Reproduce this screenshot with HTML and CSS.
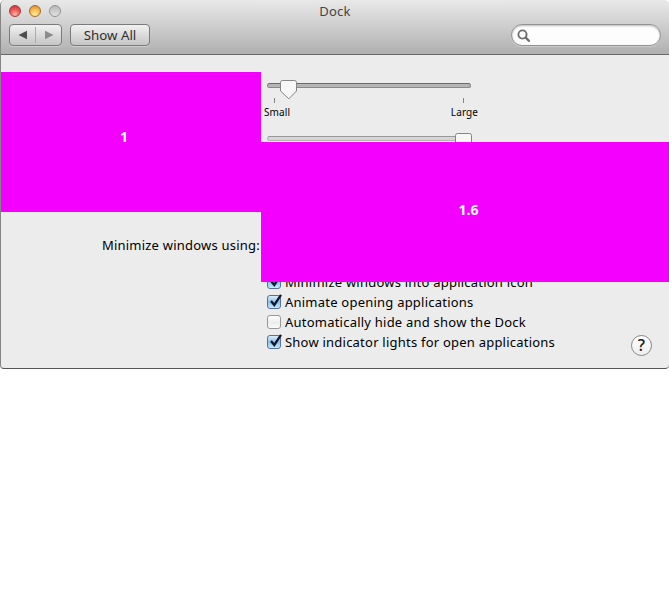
FILE: index.html
```html
<!DOCTYPE html>
<html lang="en">
<head>
<meta charset="utf-8">
<title>Dock</title>
<link rel="stylesheet" href="styles.css">
</head>
<body>
<main class="window">
  <header class="chrome">
    <div class="titlebar">
      <div class="lights"><i class="light red"></i><i class="light amber"></i><i class="light gray"></i></div>
      <h1>Dock</h1>
    </div>
    <div class="toolbar">
      <div class="nav">
        <span><svg width="10" height="10"><path d="M9 .7v8.6L.5 5z" fill="#4f4f4f"/></svg></span>
        <span><svg width="10" height="10"><path d="M1 .7v8.6L9.500 5z" fill="#8b8b8b"/></svg></span>
      </div>
      <button class="show-all"><span>Show All</span></button>
      <div class="search"><svg width="14" height="14" fill="none" stroke="#6e6e6e"><circle cx="5.500" cy="5.500" r="4.100" stroke-width="1.900"/><path d="M8.700 8.700l3.300 3.100" stroke-width="2.300" stroke-linecap="round"/></svg></div>
    </div>
  </header>
  <section class="content">
    <div class="slider size">
      <svg class="thumb" width="18" height="20"><path d="M3 .5h11.500q2 0 2 2v8.500L8.800 18.800 .5 11V2.500q0-2 2-2z" fill="#f7f7f7" stroke="#858585"/></svg>
    </div>
    <div class="ticks"><i></i><i></i></div>
    <div class="labels"><span>Small</span><span class="large">Large</span></div>
    <div class="slider magnify">
      <svg class="thumb" width="18" height="20"><path d="M3 .5h11.500q2 0 2 2v8.500L8.800 18.800 .5 11V2.500q0-2 2-2z" fill="#f7f7f7" stroke="#858585"/></svg>
    </div>
    <div class="minimize"><span>Minimize windows using:</span></div>
    <div class="options">
      <div class="option"><i class="box checked"><svg width="17" height="16"><path d="M4 7l3.300 4L14 .8" /></svg></i><span>Minimize windows into application icon</span></div>
      <div class="option"><i class="box checked"><svg width="17" height="16"><path d="M4 7l3.300 4L14 .8" /></svg></i><span>Animate opening applications</span></div>
      <div class="option"><i class="box"></i><span>Automatically hide and show the Dock</span></div>
      <div class="option"><i class="box checked"><svg width="17" height="16"><path d="M4 7l3.300 4L14 .8" /></svg></i><span>Show indicator lights for open applications</span></div>
    </div>
    <button class="help">?</button>
  </section>
  <div class="overlay first"><span>1</span></div>
  <div class="overlay second"><span>1.6</span></div>
</main>
</body>
</html>
```
FILE: styles.css
```css
* { box-sizing: border-box; }
body { margin: 0; background: #fff; font: 13px/20px "Noto Sans", sans-serif; color: #000; }
.window { position: relative; width: 669px; height: 369px; background: #ececec; border-left: 1px solid #858585; border-bottom: 1px solid #555; border-radius: 5px 5px 4px 4px; overflow: hidden; }
.chrome { height: 55px; background: linear-gradient(#e9e9e9, #cecece 48%, #b0b0b0); border-bottom: 1px solid #696969; }
.titlebar { display: grid; grid-template-columns: 1fr 40px 1fr; height: 24px; }
.lights { display: flex; gap: 8px; padding: 5px 0 0 8px; }
.light { width: 12px; height: 12px; border-radius: 50%; border: 1px solid #8a8a8a; }
.red { background: radial-gradient(circle at 50% 85%, #ffb9a9, #ed5a57 50%, #c22e34); border-color: #a33a3d; }
.amber { background: radial-gradient(circle at 50% 85%, #fff09e, #f5b64b 55%, #ce812a); border-color: #a66b2d; }
.gray { background: linear-gradient(#b9b9b9, #e2e2e2); border-color: #929292; }
h1 { margin: 1px 0 0; font-size: 13px; line-height: 20px; font-weight: 400; color: #444; text-align: center; letter-spacing: .2px; }
.toolbar { display: flex; gap: 8px; padding-left: 8px; }
.nav, .show-all { height: 22px; border: 1px solid #7b7b7b; border-radius: 4px; background: linear-gradient(#f1f1f1, #c5c5c5); box-shadow: 0 1px #cecece; }
.nav { width: 53px; display: flex; }
.nav span { flex: 1; display: flex; align-items: center; justify-content: center; }
.nav span + span { border-left: 1px solid #aaa; margin: 2px 0; }
.show-all { width: 80px; padding: 0; font: 13.300px/20px "Noto Sans", sans-serif; color: #303030; }
.search { width: 150px; height: 22px; margin: 0 8px 0 auto; padding: 4px 5px; border: 1px solid #929292; border-radius: 11px; background: #fdfdfd; box-shadow: inset 0 1px 2px #bbb, 0 1px #cacaca; }
.search svg { display: block; }
.content { position: relative; height: 313px; padding: 28px 0 0 266px; }
.slider { width: 204px; height: 5px; border: 1px solid #8a8a8a; border-top-color: #6b6b6b; border-radius: 3px; background: #b5b5b5; position: relative; }
.thumb { position: absolute; top: -4px; left: 12px; }
.magnify { background: #d6d6d6; border-color: #b5b5b5; border-top-color: #999; }
.magnify .thumb { left: 187px; }
.ticks { display: flex; justify-content: space-between; width: 190px; margin: 10px 0 0 7px; }
.ticks i { width: 1px; height: 5px; background: #858585; }
.labels { display: flex; justify-content: space-between; width: 214px; height: 16px; margin: 1px 0 16px -3px; font-size: 10px; line-height: 16px; letter-spacing: .1px; }
.minimize { width: 260px; height: 20px; margin: 94px 0 0 -266px; text-align: right; letter-spacing: .220px; }
.minimize span { display: block; margin-right: 1px; white-space: nowrap; }
.options { margin-top: 17px; letter-spacing: .225px; }
.option { display: flex; height: 20px; align-items: center; white-space: nowrap; }
.box { width: 14px; height: 14px; flex: none; margin-right: 4px; border: 1px solid #989898; border-radius: 3px; background: linear-gradient(#fff, #ececec 55%, #fafafa); }
.checked { border-color: #56719a; background: linear-gradient(#dceefb, #8fbfea 50%, #c3eaff); }
.checked svg { display: block; margin: -2px 0 0 -1px; overflow: visible; fill: none; stroke: #111a30; stroke-width: 2.300; }
.help { position: absolute; left: 630px; top: 280px; width: 21px; height: 21px; padding: 0; border: 1px solid #858585; border-radius: 50%; background: linear-gradient(#fff, #eee); font: 600 16px/19px "Open Sans", sans-serif; color: #222; }
.overlay { position: absolute; display: flex; align-items: center; justify-content: center; height: 140px; background: #f300ff; color: #fff; font: bold 14px/20px "Open Sans", sans-serif; }
.first { left: 0; top: 72px; width: 260px; padding: 0 14px 10px 0; }
.second { left: 260px; top: 142px; width: 408px; padding: 0 0 4px 7px; }
```
